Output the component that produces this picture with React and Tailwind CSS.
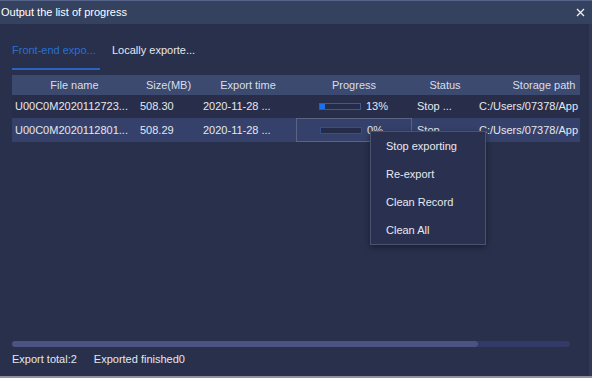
import React from "react";

const cols = [
  { key: "name", label: "File name", w: "w-[125px]" },
  { key: "size", label: "Size(MB)", w: "w-[63px]" },
  { key: "time", label: "Export time", w: "w-[96px]" },
  { key: "progress", label: "Progress", w: "w-[116px]" },
  { key: "status", label: "Status", w: "w-[66px]" },
  { key: "path", label: "Storage path", w: "w-[132px]" },
];

const rows = [
  {
    id: 1,
    name: "U00C0M2020112723...",
    size: "508.30",
    time: "2020-11-28 ...",
    progress: 13,
    status: "Stop ...",
    path: "C:/Users/07378/App",
  },
  {
    id: 2,
    name: "U00C0M2020112801...",
    size: "508.29",
    time: "2020-11-28 ...",
    progress: 0,
    status: "Stop ...",
    path: "C:/Users/07378/App",
  },
];

const menuItems = ["Stop exporting", "Re-export", "Clean Record", "Clean All"];

const ProgressCell = ({ value, focused }) => (
  <div
    className={
      "w-[116px] h-full flex items-center pl-[23px] " +
      (focused ? "border border-[#5b6485]" : "")
    }
  >
    <div
      className={
        "w-[42px] h-[7px] border bg-[#252c4a] " +
        (focused ? "border-[#34508a]" : "border-[#3c5a98]")
      }
    >
      <div className="h-full bg-[#1f6fe6]" style={{ width: value + "%" }} />
    </div>
    <span className="ml-[5px]">{value}%</span>
  </div>
);

export default function App() {
  return (
    <div
      className="relative w-[592px] h-[378px] flex flex-col bg-[#29304b] text-[11px] text-[#e4e7ef] border-b-2 border-[#8d91a1] overflow-hidden"
      style={{ fontFamily: '"Liberation Sans", Arial, sans-serif' }}
    >
      {/* title bar */}
      <div className="h-[24px] shrink-0 flex items-center justify-between pl-[1px] pr-[7px] bg-[#34425f] border-t border-[#56648a]">
        <span className="text-white">Output the list of progress</span>
        <svg width="9" height="9" viewBox="0 0 9 9" className="text-[#eef0f6]">
          <path d="M1 1 L8 8 M8 1 L1 8" stroke="currentColor" strokeWidth="1.3" />
        </svg>
      </div>

      <div className="flex-1 flex flex-col px-[12px] border-r-[3px] border-[#313857]">
        {/* tabs */}
        <div className="flex gap-[12px] pt-[16px]">
          <div className="w-[88px] flex flex-col">
            <div className="h-[20px] leading-[20px] text-[#2a6fd0] whitespace-nowrap">
              Front-end expo...
            </div>
            <div className="mt-[8px] h-[2px] bg-[#2b62c4]" />
          </div>
          <div className="h-[20px] leading-[20px] whitespace-nowrap">
            Locally exporte...
          </div>
        </div>

        {/* table */}
        <div className="mt-[5px] w-[568px] overflow-hidden">
          <div className="flex w-max h-[20px] items-center bg-[#3c4a70] text-[#d9deea]">
            {cols.map((c) => (
              <div key={c.key} className={c.w + " text-center whitespace-nowrap"}>
                {c.label}
              </div>
            ))}
          </div>
          {rows.map((r, i) => (
            <div
              key={r.id}
              className={
                "flex w-max items-center whitespace-nowrap " +
                (i === 1 ? "h-[24px] bg-[#35416a]" : "h-[23px] bg-[#282e4a]")
              }
            >
              <div className="w-[125px] pl-[3px] overflow-hidden">{r.name}</div>
              <div className="w-[63px] pl-[3px]">{r.size}</div>
              <div className="w-[96px] pl-[3px]">{r.time}</div>
              <ProgressCell value={r.progress} focused={i === 1} />
              <div className="w-[66px] pl-[5px]">{r.status}</div>
              <div className="w-[132px] pl-[1px]">{r.path}</div>
            </div>
          ))}
        </div>

        <div className="flex-1" />

        {/* horizontal scrollbar */}
        <div className="w-[558px] h-[6px] rounded-full bg-[#323a68] flex">
          <div className="w-[466px] h-full rounded-full bg-[#4b5382]" />
        </div>

        {/* footer */}
        <div className="mt-[3px] mb-[8px] h-[18px] flex items-center gap-[17px]">
          <span>Export total:2</span>
          <span>Exported finished0</span>
        </div>
      </div>

      {/* context menu */}
      <div className="absolute left-[370px] top-[131px] w-[116px] h-[114px] bg-[#2a3150] border border-[#4a5274] shadow-[0_2px_6px_rgba(0,0,0,0.4)]">
        {menuItems.map((m) => (
          <div key={m} className="h-[28px] flex items-center pl-[15px] text-[#e6e9f1]">
            {m}
          </div>
        ))}
      </div>
    </div>
  );
}
